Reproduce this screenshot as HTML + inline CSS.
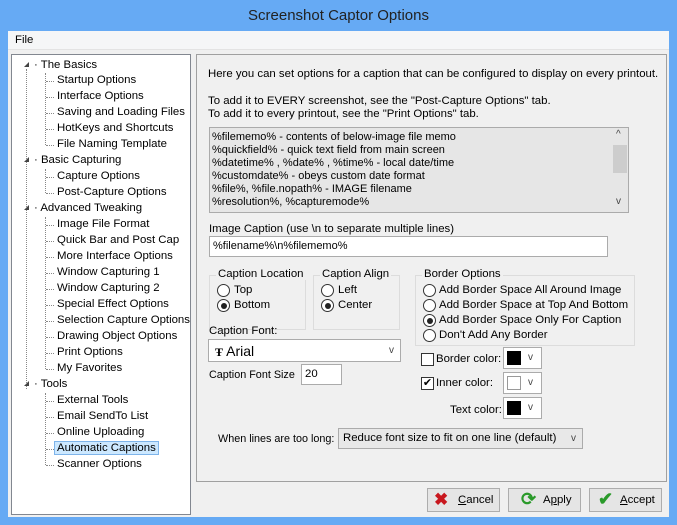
<!DOCTYPE html>
<html><head><meta charset="utf-8"><style>
*{margin:0;padding:0;box-sizing:border-box}
body{width:677px;height:525px;background:#66aaf4;font-family:"Liberation Sans",sans-serif;font-size:11.4px;color:#000;position:relative;overflow:hidden}
.a{position:absolute;white-space:nowrap}
#title{left:0;top:7px;width:677px;text-align:center;font-size:15px;color:#222}
#client{left:8px;top:31px;width:661px;height:486px;background:#f0f0f0}
#menu{left:8px;top:31px;width:661px;height:19px;background:#f5f6f7;border-bottom:1px solid #e3e3e3}
#tree{left:11px;top:54px;width:180px;height:461px;background:#fff;border:1px solid #828790}
#panel{left:196px;top:54px;width:471px;height:428px;border:1px solid #a0a0a0;background:#f0f0f0}
.ti{position:absolute;white-space:nowrap;font-size:11.4px}
.dv{position:absolute;border-left:1px dotted #888;width:0}
.dh{position:absolute;border-top:1px dotted #888;height:0;width:8px}
.tri{position:absolute;width:0;height:0;border-left:5px solid transparent;border-bottom:5px solid #444}
.box{position:absolute;border:1px solid #ababab;background:#fff}
.grp{position:absolute;border:1px solid #dcdcdc}
.lg{position:absolute;top:-8px;left:6px;background:#f0f0f0;padding:0 2px;white-space:nowrap}
.rad{position:absolute;width:13px;height:13px;border:1px solid #333;border-radius:50%;background:#fff}
.rad.on::after{content:"";position:absolute;left:2.5px;top:2.5px;width:6px;height:6px;border-radius:50%;background:#222}
.chk{position:absolute;width:13px;height:13px;border:1px solid #333;background:#fff;font-size:11px;line-height:11px;text-align:center}
.btn{position:absolute;height:24px;border:1px solid #adadad;background:#e5e5e5}
.dd{position:absolute;font-size:10px;color:#444}
</style></head><body>
<div class="a" id="title">Screenshot Captor Options</div>
<div class="a" id="client"></div>
<div class="a" id="menu"><span style="position:absolute;left:7px;top:3px">File</span></div>
<div class="a" id="tree">
<div class="dv" style="left:14px;top:14px;height:320px"></div>
<div class="tri" style="left:12px;top:7px"></div><div class="ti" style="left:22px;top:4px">· The Basics</div>
<div class="dv" style="left:33px;top:18px;height:72px"></div>
<div class="dh" style="left:34px;top:26px"></div><div class="ti" style="left:45px;top:19px">Startup Options</div>
<div class="dh" style="left:34px;top:42px"></div><div class="ti" style="left:45px;top:35px">Interface Options</div>
<div class="dh" style="left:34px;top:58px"></div><div class="ti" style="left:45px;top:51px">Saving and Loading Files</div>
<div class="dh" style="left:34px;top:74px"></div><div class="ti" style="left:45px;top:67px">HotKeys and Shortcuts</div>
<div class="dh" style="left:34px;top:90px"></div><div class="ti" style="left:45px;top:83px">File Naming Template</div>
<div class="tri" style="left:12px;top:102px"></div><div class="ti" style="left:22px;top:99px">· Basic Capturing</div>
<div class="dv" style="left:33px;top:114px;height:24px"></div>
<div class="dh" style="left:34px;top:122px"></div><div class="ti" style="left:45px;top:115px">Capture Options</div>
<div class="dh" style="left:34px;top:138px"></div><div class="ti" style="left:45px;top:131px">Post-Capture Options</div>
<div class="tri" style="left:12px;top:150px"></div><div class="ti" style="left:22px;top:147px">· Advanced Tweaking</div>
<div class="dv" style="left:33px;top:162px;height:152px"></div>
<div class="dh" style="left:34px;top:170px"></div><div class="ti" style="left:45px;top:163px">Image File Format</div>
<div class="dh" style="left:34px;top:186px"></div><div class="ti" style="left:45px;top:179px">Quick Bar and Post Cap</div>
<div class="dh" style="left:34px;top:202px"></div><div class="ti" style="left:45px;top:195px">More Interface Options</div>
<div class="dh" style="left:34px;top:218px"></div><div class="ti" style="left:45px;top:211px">Window Capturing 1</div>
<div class="dh" style="left:34px;top:234px"></div><div class="ti" style="left:45px;top:227px">Window Capturing 2</div>
<div class="dh" style="left:34px;top:250px"></div><div class="ti" style="left:45px;top:243px">Special Effect Options</div>
<div class="dh" style="left:34px;top:266px"></div><div class="ti" style="left:45px;top:259px">Selection Capture Options</div>
<div class="dh" style="left:34px;top:282px"></div><div class="ti" style="left:45px;top:275px">Drawing Object Options</div>
<div class="dh" style="left:34px;top:298px"></div><div class="ti" style="left:45px;top:291px">Print Options</div>
<div class="dh" style="left:34px;top:314px"></div><div class="ti" style="left:45px;top:307px">My Favorites</div>
<div class="tri" style="left:12px;top:326px"></div><div class="ti" style="left:22px;top:323px">· Tools</div>
<div class="dv" style="left:33px;top:338px;height:72px"></div>
<div class="dh" style="left:34px;top:346px"></div><div class="ti" style="left:45px;top:339px">External Tools</div>
<div class="dh" style="left:34px;top:362px"></div><div class="ti" style="left:45px;top:355px">Email SendTo List</div>
<div class="dh" style="left:34px;top:378px"></div><div class="ti" style="left:45px;top:371px">Online Uploading</div>
<div class="dh" style="left:34px;top:394px"></div><div class="ti" style="left:42px;top:386px;background:#cce8ff;border:1px solid #7eb4ea;padding:0 2px">Automatic Captions</div>
<div class="dh" style="left:34px;top:410px"></div><div class="ti" style="left:45px;top:403px">Scanner Options</div>
</div>
<div class="a" id="panel">
<div class="a" style="left:11px;top:13px">Here you can set options for a caption that can be configured to display on every printout.</div>
<div class="a" style="left:11px;top:40px">To add it to EVERY screenshot, see the "Post-Capture Options" tab.</div>
<div class="a" style="left:11px;top:53px">To add it to every printout, see the "Print Options" tab.</div>
<div class="box" style="left:12px;top:72px;width:420px;height:86px;background:#e6e6e6;font-size:11px;line-height:13px;padding:3px 2px">
%filememo% - contents of below-image file memo<br>%quickfield% - quick text field from main screen<br>%datetime% , %date% , %time% - local date/time<br>%customdate% - obeys custom date format<br>%file%, %file.nopath% - IMAGE filename<br>%resolution%, %capturemode%
<div style="position:absolute;right:1px;top:1px;width:15px;height:82px;background:#e6e6e6"><div style="position:absolute;top:16px;left:1px;width:14px;height:28px;background:#cdcdcd"></div><div class="dd" style="left:4px;top:-1px">^</div><div class="dd" style="left:4px;top:66px">v</div></div>
</div>
<div class="a" style="left:12px;top:168px">Image Caption (use \n to separate multiple lines)</div>
<div class="box" style="left:12px;top:181px;width:399px;height:21px;padding:3px 3px;font-size:11px">%filename%\n%filememo%</div>
<div class="grp" style="left:12px;top:220px;width:97px;height:55px"><div class="lg">Caption Location</div></div>
<div class="rad" style="left:20px;top:229px"></div><div class="a" style="left:37px;top:229px">Top</div>
<div class="rad on" style="left:20px;top:244px"></div><div class="a" style="left:37px;top:244px">Bottom</div>
<div class="grp" style="left:116px;top:220px;width:87px;height:55px"><div class="lg">Caption Align</div></div>
<div class="rad" style="left:124px;top:229px"></div><div class="a" style="left:141px;top:229px">Left</div>
<div class="rad on" style="left:124px;top:244px"></div><div class="a" style="left:141px;top:244px">Center</div>
<div class="grp" style="left:218px;top:220px;width:220px;height:71px"><div class="lg">Border Options</div></div>
<div class="rad" style="left:226px;top:229px"></div><div class="a" style="left:242px;top:229px">Add Border Space All Around Image</div>
<div class="rad" style="left:226px;top:244px"></div><div class="a" style="left:242px;top:244px">Add Border Space at Top And Bottom</div>
<div class="rad on" style="left:226px;top:259px"></div><div class="a" style="left:242px;top:259px">Add Border Space Only For Caption</div>
<div class="rad" style="left:226px;top:274px"></div><div class="a" style="left:242px;top:274px">Don't Add Any Border</div>
<div class="a" style="left:12px;top:270px">Caption Font:</div>
<div class="box" style="left:11px;top:284px;width:193px;height:23px;padding:3px 6px;font-size:14px"><b style="font-family:'Liberation Serif',serif;font-size:12px">Ŧ</b> Arial<span class="dd" style="right:6px;top:5px">v</span></div>
<div class="a" style="left:12px;top:314px;font-size:10.8px">Caption Font Size</div>
<div class="box" style="left:104px;top:309px;width:41px;height:21px;padding:3px 3px">20</div>
<div class="chk" style="left:224px;top:298px"></div><div class="a" style="left:239px;top:298px">Border color:</div>
<div class="box" style="left:306px;top:292px;width:39px;height:22px"><div style="position:absolute;left:3px;top:3px;width:14px;height:14px;background:#000"></div><span class="dd" style="left:24px;top:4px">v</span></div>
<div class="chk" style="left:224px;top:322px">✔</div><div class="a" style="left:239px;top:322px">Inner color:</div>
<div class="box" style="left:306px;top:317px;width:39px;height:22px"><div style="position:absolute;left:3px;top:3px;width:14px;height:14px;border:1px solid #999;background:#fff"></div><span class="dd" style="left:24px;top:4px">v</span></div>
<div class="a" style="left:253px;top:349px">Text color:</div>
<div class="box" style="left:306px;top:342px;width:39px;height:22px"><div style="position:absolute;left:3px;top:3px;width:14px;height:14px;background:#000"></div><span class="dd" style="left:24px;top:4px">v</span></div>
<div class="a" style="left:21px;top:378px;font-size:10.8px">When lines are too long:</div>
<div class="box" style="left:141px;top:373px;width:245px;height:21px;background:#e8e8e8;padding:3px 4px">Reduce font size to fit on one line (default)<span class="dd" style="right:6px;top:4px">v</span></div>
</div>
<div class="btn" style="left:427px;top:488px;width:73px"><span class="a" style="left:6px;top:1px;color:#c8171e;font-size:17px;font-weight:bold">✖</span><span class="a" style="left:30px;top:5px"><u>C</u>ancel</span></div>
<div class="btn" style="left:508px;top:488px;width:73px"><span class="a" style="left:12px;top:0px;color:#2a9a2a;font-size:18px;font-weight:bold">⟳</span><span class="a" style="left:34px;top:5px">A<u>p</u>ply</span></div>
<div class="btn" style="left:589px;top:488px;width:73px"><span class="a" style="left:8px;top:0px;color:#2a9a2a;font-size:18px;font-weight:bold">✔</span><span class="a" style="left:30px;top:5px"><u>A</u>ccept</span></div>
</body></html>
